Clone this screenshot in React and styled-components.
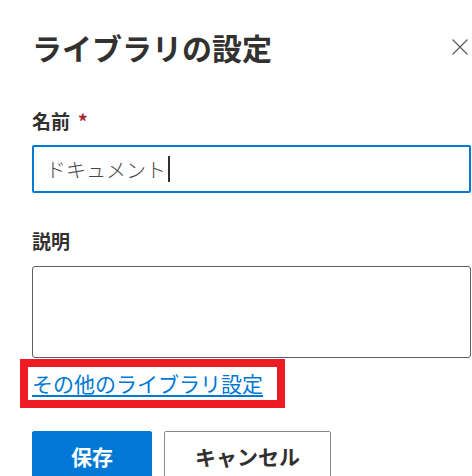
import React from "react";
import styled, { createGlobalStyle } from "styled-components";

const GlobalStyle = createGlobalStyle`
  body {
    margin: 0;
    background: #ffffff;
    font-family: "Noto Sans CJK JP", "Noto Sans", sans-serif;
    color: #323130;
  }
`;

const Panel = styled.div`
  width: 472px;
  box-sizing: border-box;
  padding: 27px 1px 0 32px;
`;

const Header = styled.div`
  display: flex;
  align-items: center;
  justify-content: space-between;
  height: 40px;
`;

const Title = styled.h1`
  margin: 0;
  font-size: 30px;
  line-height: 40px;
  font-weight: 700;
  color: #323130;
`;

const CloseButton = styled.button`
  width: 18px;
  height: 18px;
  margin-right: 2px;
  padding: 0;
  border: none;
  background: none;
  display: flex;
  align-items: center;
  justify-content: center;
  cursor: pointer;
`;

const Label = styled.div`
  margin-top: ${(p) => p.$top}px;
  font-size: 19px;
  line-height: 26px;
  font-weight: 700;
  color: #323130;
`;

const Required = styled.span`
  color: #a4262c;
  margin-left: 8px;
`;

const TextField = styled.div`
  margin-top: 11px;
  height: 48px;
  box-sizing: border-box;
  border: 2px solid #0078d4;
  border-radius: 2px;
  padding: 0 12px;
  display: flex;
  align-items: center;
  font-size: 20px;
  font-weight: 300;
  color: #444444;
`;

const Caret = styled.span`
  display: inline-block;
  width: 2px;
  height: 26px;
  margin-left: 2px;
  background: #323130;
`;

const TextArea = styled.div`
  margin-top: 12px;
  height: 92px;
  box-sizing: border-box;
  border: 1px solid #605e5c;
  border-radius: 3px;
`;

const Highlight = styled.div`
  display: inline-block;
  margin: 1px 0 0 -12px;
  border: 8px solid #ed1c24;
  padding: 0 14px 0 4px;
  background: #ffffff;
`;

const MoreLink = styled.a`
  display: block;
  font-size: 21px;
  line-height: 33px;
  color: #0078d4;
  text-decoration: underline;
  text-underline-offset: 3px;
  cursor: pointer;
`;

const Actions = styled.div`
  display: flex;
  gap: 12px;
  margin-top: 23px;
`;

const Button = styled.button`
  height: 50px;
  width: ${(p) => p.$width}px;
  box-sizing: border-box;
  border-radius: 2px;
  border: 1px solid ${(p) => (p.$primary ? "#0078d4" : "#8a8886")};
  background: ${(p) => (p.$primary ? "#0078d4" : "#ffffff")};
  color: ${(p) => (p.$primary ? "#ffffff" : "#323130")};
  font-family: inherit;
  font-size: 21px;
  font-weight: 700;
  cursor: pointer;
`;

export default function App() {
  return (
    <>
      <GlobalStyle />
      <Panel>
        <Header>
          <Title>ライブラリの設定</Title>
          <CloseButton aria-label="閉じる">
            <svg width="16" height="16" viewBox="0 0 16 16">
              <path d="M0.5 0.5 L15.5 15.5 M15.5 0.5 L0.5 15.5" stroke="#605e5c" strokeWidth="1.3" fill="none" />
            </svg>
          </CloseButton>
        </Header>

        <Label $top={41}>
          名前<Required>*</Required>
        </Label>
        <TextField>
          ドキュメント<Caret />
        </TextField>

        <Label $top={35}>説明</Label>
        <TextArea />

        <Highlight>
          <MoreLink>その他のライブラリ設定</MoreLink>
        </Highlight>

        <Actions>
          <Button $primary $width={120}>保存</Button>
          <Button $width={167}>キャンセル</Button>
        </Actions>
      </Panel>
    </>
  );
}
